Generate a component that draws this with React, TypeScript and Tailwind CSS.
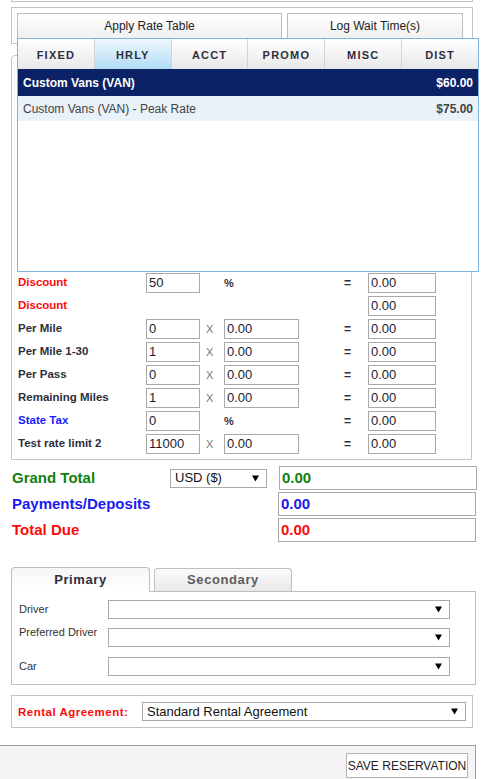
import React from "react";

type RateRow = {
  label: string;
  tone?: "red" | "blue";
  qty?: string;
  op?: "x" | "%";
  rate?: string;
  eq: boolean;
  total: string;
};

const rateRows: RateRow[] = [
  { label: "Discount", tone: "red", qty: "50", op: "%", eq: true, total: "0.00" },
  { label: "Discount", tone: "red", eq: false, total: "0.00" },
  { label: "Per Mile", qty: "0", op: "x", rate: "0.00", eq: true, total: "0.00" },
  { label: "Per Mile 1-30", qty: "1", op: "x", rate: "0.00", eq: true, total: "0.00" },
  { label: "Per Pass", qty: "0", op: "x", rate: "0.00", eq: true, total: "0.00" },
  { label: "Remaining Miles", qty: "1", op: "x", rate: "0.00", eq: true, total: "0.00" },
  { label: "State Tax", tone: "blue", qty: "0", op: "%", eq: true, total: "0.00" },
  { label: "Test rate limit 2", qty: "11000", op: "x", rate: "0.00", eq: true, total: "0.00" },
];

const tabs = ["FIXED", "HRLY", "ACCT", "PROMO", "MISC", "DIST"];

function Box({ value, className }: { value: string; className: string }) {
  return (
    <div className={`h-[20px] border border-[#a9a9a9] bg-white pl-[2px] text-[13px] leading-[18px] text-[#1c1c30] font-['Liberation_Sans',Arial,sans-serif] ${className}`}>
      {value}
    </div>
  );
}

function Arrow() {
  return (
    <svg width="7" height="7" viewBox="0 0 7 7" className="shrink-0">
      <path d="M0 0.5h7L3.5 6.5z" fill="#000" />
    </svg>
  );
}

function Select({ value, className }: { value?: string; className: string }) {
  return (
    <div className={`flex items-center justify-between border border-[#a9a9a9] bg-white pl-[4px] pr-[7px] text-[13px] text-[#111] font-['Liberation_Sans',Arial,sans-serif] ${className}`}>
      <span>{value}</span>
      <Arrow />
    </div>
  );
}

function RatePopup() {
  return (
    <div className="absolute left-[17px] top-[38px] w-[462px] h-[234px] border border-[#7fb4df] bg-white">
      <div className="flex h-[30px]">
        {tabs.map((t, i) => (
          <div
            key={t}
            className={`flex-1 flex items-center justify-center pt-[2px] text-[11px] font-bold tracking-[1.2px] text-[#2f2f3f] ${
              i > 0 ? "border-l border-[#d4d4d4]" : ""
            } ${t === "HRLY" ? "bg-linear-to-b from-[#eef8fe] to-[#b2dcf5]" : "bg-linear-to-b from-white to-[#e8e8e8]"}`}
          >
            {t}
          </div>
        ))}
      </div>
      <div className="flex items-center justify-between h-[27px] bg-[#0b2266] px-[5px] text-[12px] font-bold text-white">
        <span>Custom Vans (VAN)</span>
        <span>$60.00</span>
      </div>
      <div className="flex items-center justify-between h-[25px] bg-[#e9f1f9] px-[5px] text-[12px] text-[#444]">
        <span>Custom Vans (VAN) - Peak Rate</span>
        <span className="font-bold">$75.00</span>
      </div>
    </div>
  );
}

export default function App() {
  return (
    <div className="relative w-[495px] h-[779px] overflow-hidden bg-white font-['Liberation_Sans',Arial,sans-serif] text-[#333]">
      {/* panel above, only its bottom edge is in view */}
      <div className="ml-[11px] w-[462px] h-[2px] border-x border-b border-[#c4c4c4]" />

      <div className="mt-[5px] ml-[11px] w-[462px] h-[37px] border border-[#c4c4c4] pt-[5px] pl-[5px] flex gap-[5px]">
        <button className="w-[265px] h-[28px] pb-[2px] border border-[#bdbdbd] bg-linear-to-b from-white to-[#efefef] text-[12px] text-[#222]">
          Apply Rate Table
        </button>
        <button className="w-[176px] h-[28px] pb-[2px] border border-[#bdbdbd] bg-linear-to-b from-white to-[#efefef] text-[12px] text-[#222]">
          Log Wait Time(s)
        </button>
      </div>

      <div className="mt-[11px] ml-[11px] w-[461px] border border-[#c4c4c4] rounded-tl-[4px] pl-[6px] pb-[5px]">
        <div className="h-[217px]" />
        <div className="flex flex-col gap-[3px]">
          {rateRows.map((r, i) => (
            <div key={i} className="flex items-center h-[20px]">
              <div
                className={`w-[128px] text-[11.5px] font-bold ${
                  r.tone === "red" ? "text-[#ff0a0a]" : r.tone === "blue" ? "text-[#1a1aff]" : "text-[#2e2e3e]"
                }`}
              >
                {r.label}
              </div>
              {r.qty !== undefined ? <Box value={r.qty} className="w-[54px]" /> : <div className="w-[54px]" />}
              <div className="w-[24px] pl-[6px] text-[11px] text-[#777]">{r.op === "x" ? "X" : ""}</div>
              {r.op === "%" ? (
                <div className="w-[75px] text-[11px] font-bold text-[#2e2e3e]">%</div>
              ) : r.rate !== undefined ? (
                <Box value={r.rate} className="w-[75px]" />
              ) : (
                <div className="w-[75px]" />
              )}
              <div className="w-[69px] pl-[45px] text-[12px] font-bold text-[#2e2e3e]">{r.eq ? "=" : ""}</div>
              <Box value={r.total} className="w-[68px]" />
            </div>
          ))}
        </div>
      </div>

      <RatePopup />

      <div className="mt-[6px] flex flex-col gap-[2px] pl-[12px]">
        <div className="flex items-center h-[24px]">
          <div className="w-[158px] text-[15px] font-bold text-[#11800f]">Grand Total</div>
          <Select value="USD ($)" className="w-[97px] h-[19px] text-[12px]" />
          <div className="w-[12px]" />
          <div className="w-[198px] h-[24px] border border-[#a9a9a9] pl-[2px] text-[15px] leading-[22px] font-bold text-[#11800f]">0.00</div>
        </div>
        <div className="flex items-center h-[24px]">
          <div className="w-[266px] text-[15px] font-bold text-[#1a1aee]">Payments/Deposits</div>
          <div className="w-[198px] h-[24px] border border-[#a9a9a9] pl-[2px] text-[15px] leading-[22px] font-bold text-[#1a1aee]">0.00</div>
        </div>
        <div className="flex items-center h-[24px]">
          <div className="w-[266px] text-[15px] font-bold text-[#ff0a0a]">Total Due</div>
          <div className="w-[198px] h-[24px] border border-[#a9a9a9] pl-[2px] text-[15px] leading-[22px] font-bold text-[#ff0a0a]">0.00</div>
        </div>
      </div>

      <div className="mt-[25px] ml-[11px] w-[465px]">
        <div className="flex items-end gap-[4px] h-[24px]">
          <div className="relative z-10 -mb-px w-[139px] h-[25px] border border-b-0 border-[#bdbdbd] rounded-t-[4px] bg-linear-to-b from-[#f6f6f6] to-white flex items-center justify-center text-[13px] font-bold tracking-[0.6px] text-[#2e2e3e]">
            Primary
          </div>
          <div className="w-[138px] h-[23px] border border-b-0 border-[#bdbdbd] rounded-t-[4px] bg-linear-to-b from-[#fbfbfb] to-[#e9e9e9] flex items-center justify-center text-[13px] font-bold tracking-[0.6px] text-[#5d5d5d]">
            Secondary
          </div>
        </div>
        <div className="border border-[#bdbdbd] pl-[7px] pt-[8px] pb-[8px] flex flex-col">
          <div className="flex items-center h-[19px]">
            <div className="w-[89px] text-[11px] text-[#333]">Driver</div>
            <Select className="w-[342px] h-[19px]" />
          </div>
          <div className="flex items-start mt-[9px] h-[19px]">
            <div className="w-[89px] text-[11px] leading-[11px] text-[#333] -mt-[1px]">Preferred Driver</div>
            <Select className="w-[342px] h-[19px]" />
          </div>
          <div className="flex items-center mt-[10px] h-[19px]">
            <div className="w-[89px] text-[11px] text-[#333]">Car</div>
            <Select className="w-[342px] h-[19px]" />
          </div>
        </div>
      </div>

      <div className="mt-[10px] ml-[11px] w-[462px] h-[33px] border border-[#c4c4c4] flex items-center pl-[6px]">
        <div className="w-[124px] pt-[2px] text-[11.5px] font-bold tracking-[0.5px] text-[#ff0a0a]">Rental Agreement:</div>
        <Select value="Standard Rental Agreement" className="w-[324px] h-[19px]" />
      </div>

      <div className="mt-[17px] w-[476px] h-[40px] border-t border-r border-[#9a9a9a] bg-[#f5f3f5] flex justify-end pt-[7px] pr-[7px]">
        <button className="w-[122px] h-[25px] border border-[#b4b4b4] bg-white text-[12px] text-[#222]">
          SAVE RESERVATION
        </button>
      </div>
    </div>
  );
}
